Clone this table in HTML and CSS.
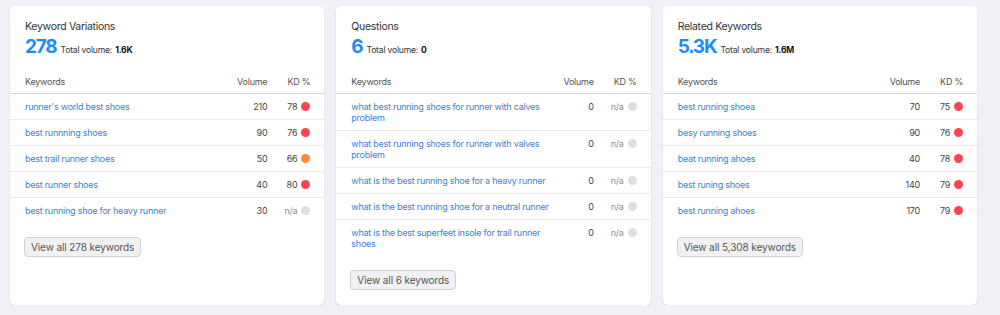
FILE: index.html
```html
<!DOCTYPE html>
<html>
<head>
<meta charset="utf-8">
<link rel="stylesheet" href="styles.css">
</head>
<body>
<div class="grid">
  <section class="card">
    <h2 class="title">Keyword Variations</h2>
    <div class="summary"><span class="big">278</span><span class="tv">Total volume:</span><b class="tvv">1.6K</b></div>
    <table class="kw">
      <colgroup><col><col class="c-vol"><col class="c-kd"></colgroup>
      <thead><tr><th class="k">Keywords</th><th class="v">Volume</th><th class="d">KD %</th></tr></thead>
      <tbody>
        <tr><td class="k"><a>runner's world best shoes</a></td><td class="v">210</td><td class="d">78<i class="dot red"></i></td></tr>
        <tr><td class="k"><a>best runnning shoes</a></td><td class="v">90</td><td class="d">76<i class="dot red"></i></td></tr>
        <tr><td class="k"><a>best trail runner shoes</a></td><td class="v">50</td><td class="d">66<i class="dot orange"></i></td></tr>
        <tr><td class="k"><a>best runner shoes</a></td><td class="v">40</td><td class="d">80<i class="dot red"></i></td></tr>
        <tr><td class="k"><a>best running shoe for heavy runner</a></td><td class="v">30</td><td class="d na">n/a<i class="dot gray"></i></td></tr>
      </tbody>
    </table>
    <button class="btn">View all 278 keywords</button>
  </section>
  <section class="card">
    <h2 class="title">Questions</h2>
    <div class="summary"><span class="big">6</span><span class="tv">Total volume:</span><b class="tvv">0</b></div>
    <table class="kw">
      <colgroup><col><col class="c-vol"><col class="c-kd"></colgroup>
      <thead><tr><th class="k">Keywords</th><th class="v">Volume</th><th class="d">KD %</th></tr></thead>
      <tbody>
        <tr><td class="k"><a>what best running shoes for runner with calves problem</a></td><td class="v">0</td><td class="d na">n/a<i class="dot gray"></i></td></tr>
        <tr><td class="k"><a>what best running shoes for runner with valves problem</a></td><td class="v">0</td><td class="d na">n/a<i class="dot gray"></i></td></tr>
        <tr><td class="k"><a>what is the best running shoe for a heavy runner</a></td><td class="v">0</td><td class="d na">n/a<i class="dot gray"></i></td></tr>
        <tr><td class="k"><a>what is the best running shoe for a neutral runner</a></td><td class="v">0</td><td class="d na">n/a<i class="dot gray"></i></td></tr>
        <tr><td class="k"><a>what is the best superfeet insole for trail runner shoes</a></td><td class="v">0</td><td class="d na">n/a<i class="dot gray"></i></td></tr>
      </tbody>
    </table>
    <button class="btn">View all 6 keywords</button>
  </section>
  <section class="card">
    <h2 class="title">Related Keywords</h2>
    <div class="summary"><span class="big">5.3K</span><span class="tv">Total volume:</span><b class="tvv">1.6M</b></div>
    <table class="kw">
      <colgroup><col><col class="c-vol"><col class="c-kd"></colgroup>
      <thead><tr><th class="k">Keywords</th><th class="v">Volume</th><th class="d">KD %</th></tr></thead>
      <tbody>
        <tr><td class="k"><a>best running shoea</a></td><td class="v">70</td><td class="d">75<i class="dot red"></i></td></tr>
        <tr><td class="k"><a>besy running shoes</a></td><td class="v">90</td><td class="d">76<i class="dot red"></i></td></tr>
        <tr><td class="k"><a>beat running ahoes</a></td><td class="v">40</td><td class="d">78<i class="dot red"></i></td></tr>
        <tr><td class="k"><a>best runing shoes</a></td><td class="v">140</td><td class="d">79<i class="dot red"></i></td></tr>
        <tr><td class="k"><a>best running ahoes</a></td><td class="v">170</td><td class="d">79<i class="dot red"></i></td></tr>
      </tbody>
    </table>
    <button class="btn">View all 5,308 keywords</button>
  </section>
</div>
</body>
</html>
```

FILE: styles.css
```css
html, body {
  margin: 0;
  padding: 0;
  background: #f0f1f6;
  font-family: Inter, "Noto Sans", sans-serif;
}
body {
  padding: 6px 23px 0 10px;
}
.grid {
  display: grid;
  grid-template-columns: repeat(3, 1fr);
  gap: 12px;
}
.card {
  background: #fff;
  border-radius: 5px;
  box-shadow: 0 1px 2px rgba(0, 0, 0, 0.12);
  height: 299px;
  box-sizing: border-box;
  padding-top: 14px;
}
.title {
  margin: 0 15px;
  font-size: 10.5px;
  letter-spacing: -0.3px;
  font-weight: 400;
  line-height: 14px;
  color: #333;
}
.summary {
  margin: 2px 15px 0;
  display: flex;
  align-items: baseline;
  gap: 3px;
  height: 22px;
}
.big {
  font-size: 19px;
  letter-spacing: -1.2px;
  font-weight: 700;
  color: #1a8cff;
  line-height: 22px;
  margin-right: 1px;
}
.tv {
  font-size: 8.6px;
  letter-spacing: -0.2px;
  color: #333;
}
.tvv {
  font-size: 8.6px;
  letter-spacing: -0.2px;
  font-weight: 700;
  color: #111;
}
.kw {
  width: 100%;
  border-collapse: collapse;
  table-layout: fixed;
  margin-top: 18px;
  font-size: 9px;
  letter-spacing: -0.25px;
}
.c-vol { width: 42px; }
.c-kd { width: 57px; }
.kw th {
  font-weight: 400;
  color: #555;
  height: 17px;
  padding: 0;
  border-bottom: 1px solid #d4d6db;
  vertical-align: top;
  line-height: 12px;
}
.kw td {
  padding: 7px 0;
  line-height: 11px;
  border-bottom: 1px solid #eaebee;
  vertical-align: top;
  color: #444;
}
.kw tr:last-child td { border-bottom: none; }
.kw .k { text-align: left; padding-left: 15px; padding-right: 0; }
.kw .v { text-align: right; }
.kw .d { text-align: right; padding-right: 14px; white-space: nowrap; }
.kw td.na { color: #8a8c92; }
.kw a { color: #3d7fd6; }
.dot {
  display: inline-block;
  width: 9px;
  height: 9px;
  border-radius: 50%;
  margin-left: 4px;
  vertical-align: -1px;
}
.red { background: #ff4451; }
.orange { background: #ff8c3a; }
.gray { background: #dcdee3; }
.btn {
  margin: 14px 0 0 14px;
  height: 20px;
  padding: 0 6px;
  border: 1px solid #cfd1d6;
  border-radius: 4px;
  background: #f1f1f3;
  color: #555;
  font-family: Inter, "Noto Sans", sans-serif;
  font-size: 10px;
  letter-spacing: -0.1px;
}
```
